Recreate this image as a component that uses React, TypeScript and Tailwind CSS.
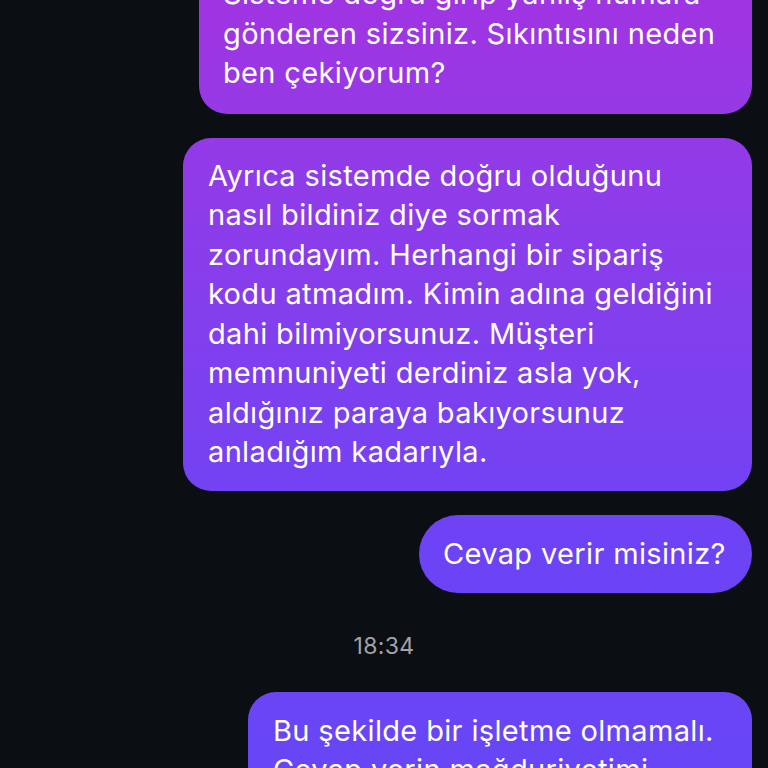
import React from "react";

const bubbleBg =
  "bg-fixed bg-linear-to-b from-[#a034e2] via-[#6c43f5] via-[72%] to-[#6846f5]";

function Bubble({
  lines,
  className,
}: {
  lines: string[];
  className: string;
}) {
  return (
    <div
      className={`${bubbleBg} text-white text-[29px] leading-[39.5px] tracking-[0.35px] ${className}`}
    >
      {lines.map((l, i) => (
        <div key={i} className="whitespace-nowrap">
          {l}
        </div>
      ))}
    </div>
  );
}

export default function App() {
  return (
    <div
      className="w-[768px] h-[768px] overflow-hidden bg-[#0b0e13]"
      style={{ fontFamily: "Inter, 'Noto Sans', sans-serif" }}
    >
      <div className="flex flex-col items-end pr-4">
        <Bubble
          className="mt-[-44px] w-[553px] rounded-[28px] pl-[24px] pt-[18px] pb-[21px]"
          lines={[
            "Sisteme doğru girip yanlış numara",
            "gönderen sizsiniz. Sıkıntısını neden",
            "ben çekiyorum?",
          ]}
        />
        <Bubble
          className="mt-[24px] w-[569px] rounded-[28px] pl-[25px] pt-[18px] pb-[19px]"
          lines={[
            "Ayrıca sistemde doğru olduğunu",
            "nasıl bildiniz diye sormak",
            "zorundayım. Herhangi bir sipariş",
            "kodu atmadım. Kimin adına geldiğini",
            "dahi bilmiyorsunuz. Müşteri",
            "memnuniyeti derdiniz asla yok,",
            "aldığınız paraya bakıyorsunuz",
            "anladığım kadarıyla.",
          ]}
        />
        <Bubble
          className="mt-[24px] w-[333px] h-[78px] rounded-full pl-[24px] flex flex-col justify-center"
          lines={["Cevap verir misiniz?"]}
        />
        <div className="self-stretch pl-4 flex justify-center mt-[41px] h-[26px] items-center text-[23px] tracking-[0.3px] text-[#a3a3a8]">
          18:34
        </div>
        <Bubble
          className="mt-[32px] w-[504px] rounded-[28px] pl-[25px] pt-[19px] pb-[19px]"
          lines={[
            "Bu şekilde bir işletme olmamalı.",
            "Cevap verin mağduriyetimi",
            "giderin.",
          ]}
        />
      </div>
    </div>
  );
}
